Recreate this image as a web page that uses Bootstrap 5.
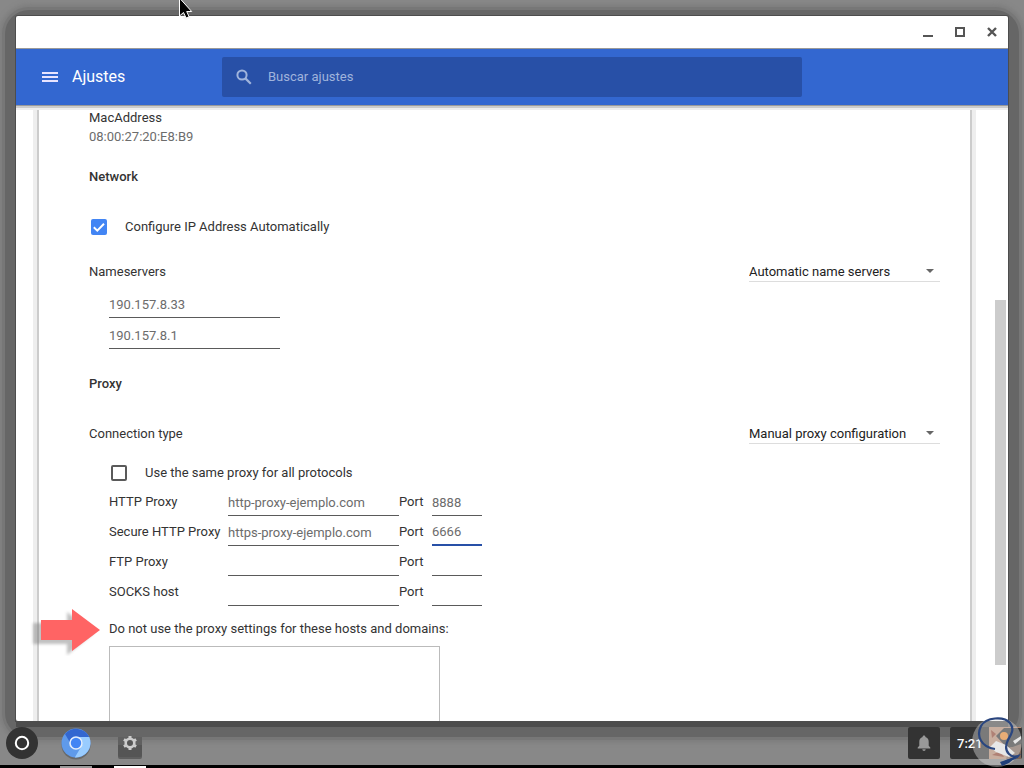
<!DOCTYPE html>
<html lang="es">
<head>
<meta charset="utf-8">
<meta name="viewport" content="width=device-width, initial-scale=1">
<title>Ajustes</title>
<link href="https://cdn.jsdelivr.net/npm/bootstrap@5.3.0/dist/css/bootstrap.min.css" rel="stylesheet">
<style>
  body { font: 13px/19px Roboto, "Liberation Sans", sans-serif; color: #333; background: #888; }
  .desktop { isolation: isolate; }
  .shrinkable { min-height: 0; }
  .app-window { margin: 16px 16px 0; box-shadow: 0 0 0 1px #4d4d4d, 0 6px 0 0 #4d4d4d; border-radius: 2px 2px 0 0; }
  .app-window::before { content: ""; position: absolute; z-index: -1; border-radius: 24px; inset: -6px -11px -16px; background: #666; box-shadow: 0 0 0 3px #777, 0 0 4px 6px #7e7e7e; }
  .window-body { background: #fff; border-radius: 2px; }
  .title-bar { height: 33px; padding-right: 9px; border-bottom: 1px solid #999; }
  .title-bar button { width: 14px; height: 14px; margin-left: 18px; }
  .plain { padding: 0; border: 0; background: none; display: flex; align-items: center; justify-content: center; }
  .toolbar { height: 56px; background: #3367d0; color: #fff; padding: 8px 26px; z-index: 2; box-shadow: 0 1px 0 #999, 0 3px 0 #ccc, 0 5px 0 #eee; }
  .toolbar h1 { font-size: 16px; line-height: 24px; width: 164px; padding-left: 14px; font-weight: 400; }
  .search { width: 580px; height: 40px; background: #2850a7; border-radius: 2px; padding-left: 14px; }
  .search input { font-size: 13px; line-height: 19px; color: #fff; background: none; border: 0; outline: 0; padding: 0 0 2px 16px; }
  .search input::placeholder { color: #a0b4dc; opacity: 1; }
  .sheet { margin-left: 23px; margin-right: 23px; padding: 3px 30px 0 50px; box-shadow: 0 0 0 2px #ccc, 0 0 0 6px #eee; }
  .rail { width: 15px; padding: 195px 2px 0; }
  .thumb { height: 365px; background: #ccc; width: 11px; }
  .muted { color: #6c6c6c; }
  .group-title { font-size: 13px; line-height: 19px; font-weight: 500; }
  .net-title { padding: 21px 0 20px; }
  .auto-row { height: 41px; }
  .ns-row { height: 48px; }
  .proxy-title { padding: 25px 0 26px; }
  .type-row { height: 28px; }
  .same-row { height: 39px; padding-top: 12px; }
  .hosts-row { padding: 13px 0 8px; }
  .tick { appearance: none; width: 16px; height: 16px; margin: 0 18px 0 2px; border: 2px solid #5a5a5a; border-radius: 2px; }
  .tick:checked { border: 0; background: #4285f4 url("data:image/svg+xml,%3Csvg xmlns='http://www.w3.org/2000/svg' viewBox='0 0 16 16'%3E%3Cpath d='M2.8 8.2l3.5 3.4L13 4.8' fill='none' stroke='%23fff' stroke-width='2'/%3E%3C/svg%3E"); }
  .drop { appearance: none; width: 191px; height: 22px; padding: 1px 0 0; border: 0; border-bottom: 1px solid #ddd; border-radius: 0; color: #222; background: url("data:image/svg+xml,%3Csvg xmlns='http://www.w3.org/2000/svg' viewBox='0 0 8 4'%3E%3Cpath d='M0 0h8L4 4z' fill='%23666'/%3E%3C/svg%3E") right 6px center / 8px 4px no-repeat; }
  .line-input { width: 171px; height: 23px; padding: 0 0 3px; border: 0; border-bottom: 1px solid #5a5a5a; border-radius: 0; color: #6c6c6c; background: none; outline: 0; }
  .proxies { display: grid; grid-template-columns: 119px 171px 33px 50px; grid-auto-rows: 30px; align-items: center; }
  .proxies .line-input { height: 27px; align-self: end; padding: 0; }
  .proxies .port { width: 50px; }
  .proxies .current { border-bottom: 2px solid #2850a7; }
  .indent { padding-left: 20px; }
  .hosts { width: 331px; height: 120px; border: 1px solid #bbb; resize: none; }
  .pointer { position: absolute; left: -82px; top: 0; }
  .shelf { height: 47px; padding: 6px 2px 0 6px; background: linear-gradient(transparent 44px, #000 44px); }
  .shelf-item { width: 32px; height: 41px; margin-right: 22px; align-items: flex-start; }
  .running { border-bottom: 2px solid #999; }
  .active-app { border-bottom: 2px solid #fff; }
  .tray { height: 32px; background: #333; border-radius: 2px; }
  .clock { width: 72px; color: #fff; font-weight: 500; margin-left: 10px; padding-left: 7px; }
  .watermark { position: absolute; right: 0; bottom: 0; }
  .mouse { position: absolute; left: 178px; top: 0; }
</style>
</head>
<body>
<div class="desktop vh-100 d-flex flex-column position-relative overflow-hidden">
  <div class="app-window shrinkable position-relative flex-grow-1 d-flex flex-column">
    <div class="window-body shrinkable flex-grow-1 d-flex flex-column overflow-hidden">
      <div class="title-bar d-flex align-items-center justify-content-end flex-shrink-0">
        <button class="plain" aria-label="Minimizar"><svg width="14" height="14"><path d="M2 10h10v2H2z" fill="#555"/></svg></button>
        <button class="plain" aria-label="Maximizar"><svg width="14" height="14"><path d="M3 3h8v8H3z" fill="none" stroke="#555" stroke-width="2"/></svg></button>
        <button class="plain" aria-label="Cerrar"><svg width="14" height="14"><path d="M3 3l8 8M11 3l-8 8" stroke="#555" stroke-width="2.4"/></svg></button>
      </div>
      <header class="toolbar d-flex align-items-center flex-shrink-0 position-relative">
        <button class="plain" aria-label="Menú"><svg width="16" height="12"><path d="M0 2h16M0 6h16M0 10h16" stroke="#e8e4ff" stroke-width="2"/></svg></button>
        <h1 class="mb-0 flex-shrink-0">Ajustes</h1>
        <div class="search d-flex align-items-center" role="search">
          <svg width="16" height="16" viewBox="0 0 16 16" class="flex-shrink-0"><circle cx="6" cy="6" r="4.6" fill="none" stroke="#a0b4dc" stroke-width="2"/><path d="M9.4 9.4l5.4 5.4" stroke="#a0b4dc" stroke-width="2.2"/></svg>
          <input class="flex-grow-1" type="search" placeholder="Buscar ajustes" aria-label="Buscar ajustes">
        </div>
      </header>
      <div class="shrinkable d-flex flex-grow-1 overflow-hidden">
        <main class="sheet flex-grow-1">
          <div>MacAddress</div>
          <div class="muted">08:00:27:20:E8:B9</div>
          <h2 class="group-title net-title mb-0">Network</h2>
          <div class="auto-row d-flex align-items-center"><input class="tick" type="checkbox" id="auto" checked><label for="auto">Configure IP Address Automatically</label></div>
          <div class="ns-row d-flex align-items-center justify-content-between"><label for="ns">Nameservers</label>
            <select class="drop" id="ns"><option>Automatic name servers</option></select></div>
          <div class="indent d-flex flex-column gap-2">
            <input class="line-input" value="190.157.8.33" aria-label="Nameserver 1">
            <input class="line-input" value="190.157.8.1" aria-label="Nameserver 2">
          </div>
          <h2 class="group-title proxy-title mb-0">Proxy</h2>
          <div class="type-row d-flex align-items-center justify-content-between"><label for="ct">Connection type</label>
            <select class="drop" id="ct"><option>Manual proxy configuration</option></select></div>
          <div class="indent">
            <div class="same-row d-flex align-items-center"><input class="tick" type="checkbox" id="same"><label for="same">Use the same proxy for all protocols</label></div>
            <div class="proxies">
              <label for="h1">HTTP Proxy</label><input class="line-input" id="h1" value="http-proxy-ejemplo.com"><label for="p1">Port</label><input class="line-input port" id="p1" value="8888">
              <label for="h2">Secure HTTP Proxy</label><input class="line-input" id="h2" value="https-proxy-ejemplo.com"><label for="p2">Port</label><input class="line-input port current" id="p2" value="6666">
              <label for="h3">FTP Proxy</label><input class="line-input" id="h3"><label for="p3">Port</label><input class="line-input port" id="p3">
              <label for="h4">SOCKS host</label><input class="line-input" id="h4"><label for="p4">Port</label><input class="line-input port" id="p4">
            </div>
            <div class="hosts-row position-relative">
              <label for="hosts">Do not use the proxy settings for these hosts and domains:</label>
              <svg class="pointer" width="76" height="50" aria-hidden="true">
                <defs><filter id="soft" x="-20%" y="-20%" width="140%" height="140%"><feGaussianBlur stdDeviation="1.5"/></filter></defs>
                <path d="M6 17h34V6l27 21-27 22V38H6z" fill="#777" opacity=".45" filter="url(#soft)"/>
                <path d="M14 14h31V3l28 21-28 21V34H14z" fill="#ff6464"/>
              </svg>
            </div>
            <textarea class="hosts d-block" id="hosts"></textarea>
          </div>
        </main>
        <div class="rail"><div class="thumb"></div></div>
      </div>
    </div>
  </div>

  <nav class="shelf d-flex align-items-start flex-shrink-0 position-relative">
    <button class="plain shelf-item" aria-label="Aplicaciones"><svg width="32" height="32"><circle cx="16" cy="16" r="16" fill="#333"/><circle cx="16" cy="16" r="6.2" fill="none" stroke="#fff" stroke-width="2"/></svg></button>
    <button class="plain shelf-item running" aria-label="Chromium"><svg width="32" height="34">
      <circle cx="16" cy="18" r="14.5" fill="#555" opacity=".6"/>
      <circle cx="16" cy="16" r="14.5" fill="#5f9aea"/>
      <path d="M5 7A14.5 14.5 0 0 1 29.2 10H16a6 6 0 0 0-6 5.5z" fill="#3367d0"/>
      <path d="M29.2 10A14.5 14.5 0 0 1 14.8 30.4L21.3 19.5A6 6 0 0 0 16 10z" fill="#99ccff"/>
      <circle cx="16" cy="16" r="6" fill="#4285f4" stroke="#e4eefc" stroke-width="1.6"/></svg></button>
    <button class="plain shelf-item active-app" aria-label="Ajustes"><svg width="32" height="34">
      <path d="M4 18h24v12a2 2 0 0 1-2 2H6a2 2 0 0 1-2-2z" fill="#444" opacity=".6"/>
      <path d="M4 10h24v8H4z" fill="#606060"/>
      <path d="M4 18h24v10a2 2 0 0 1-2 2H6a2 2 0 0 1-2-2z" fill="#555"/>
      <path d="M16 11V9M16 21v2M11.700 13.500l-1.800-1M20.300 13.500l1.800-1M11.700 18.500l-1.800 1M20.300 18.500l1.800 1" stroke="#ccc" stroke-width="3"/>
      <circle cx="16" cy="16" r="4.300" fill="#555" stroke="#ccc" stroke-width="2.600"/></svg></button>
    <button class="plain tray ms-auto px-2" aria-label="Notificaciones"><svg width="16" height="18"><path d="M8 1.500c.9 0 1.400.6 1.400 1.400 2.200.6 3.300 2.300 3.300 4.800v4.100l1.600 1.800v.8H1.700v-.8l1.600-1.800V7.700c0-2.500 1.100-4.200 3.300-4.800 0-.8.5-1.400 1.400-1.400zM6.300 15.200h3.400a1.700 1.700 0 0 1-3.400 0z" fill="#999"/></svg></button>
    <div class="tray clock d-flex align-items-center">7:21</div>
  </nav>

  <svg class="watermark" width="52" height="58" aria-hidden="true">
    <path d="M17 17h32v32H17z" fill="#b98c72"/>
    <path d="M24 26l8-8h17v18l-14 2z" fill="#333"/>
    <path d="M38 38l11-4v15H34z" fill="#7d6558"/>
    <path d="M19 20l5 4-4 4zM20 45l8-4 4 6z" fill="#8e3f2a"/>
    <circle cx="32" cy="26" r="4" fill="#f08a2c"/>
    <path d="M18 37l6-6 10 4 9 8-6 4-13-5zM41 31l8-5v3l-6 5z" fill="#eee"/>
    <circle cx="25" cy="32" r="25" fill="#ddd" opacity=".42"/>
    <path d="M23 39C9 37 4 26 9 16 14 7 32 6 38 13c5 6 1 12-2 17-3 6-2 11 1 14 3 3 6 3 9 2-3 4-10 3-13 6" fill="none" stroke="#2a467f" stroke-width="2.200"/>
    <path d="M28 52l9-3 8-3-8 7-7 3z" fill="#203f79"/>
  </svg>
  <svg class="mouse" width="20" height="24" aria-hidden="true">
    <path d="M4 18l4-3 5 3-5 2z" fill="#eee" opacity=".5"/>
    <path d="M1.500-2v18l4-3.500 2.600 5.500 3-1.300-2.400-5.200h5z" fill="#000" stroke="#fff"/></svg>
</div>
</body>
</html>
